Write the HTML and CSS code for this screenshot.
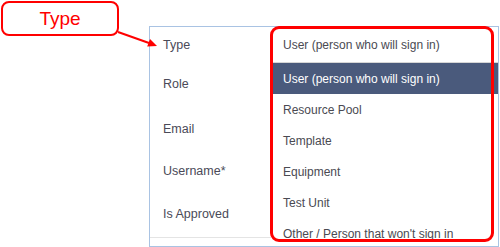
FILE: index.html
```html
<!DOCTYPE html>
<html lang="en">
<head>
  <meta charset="UTF-8" />
  <title>Type dropdown</title>
  <link rel="stylesheet" href="styles.css">
</head>
<body>
  <div class="page">
    <div class="panel">
      <ul class="labels">
        <li>Type</li>
        <li>Role</li>
        <li>Email</li>
        <li>Username*</li>
        <li>Is Approved</li>
      </ul>
      <div class="dropdown">
        <div class="dropdown-value">User (person who will sign in)</div>
        <ul class="dropdown-list">
          <li class="selected">User (person who will sign in)</li>
          <li>Resource Pool</li>
          <li>Template</li>
          <li>Equipment</li>
          <li>Test Unit</li>
          <li>Other / Person that won't sign in</li>
        </ul>
      </div>
    </div>

    <!-- annotation -->
    <div class="callout">Type</div>
    <div class="highlight-box"></div>
    <svg class="arrow" width="500" height="247" viewBox="0 0 500 247">
      <line x1="118" y1="32" x2="149" y2="43" stroke="#f00" stroke-width="2" />
      <polygon points="157,46 147.2,46.6 150,39.1" fill="#f00" />
    </svg>
  </div>
</body>
</html>
```

FILE: styles.css
```css
body {
  margin: 0;
  padding: 0;
  background: white;
  font-family: 'Liberation Sans', Arial, sans-serif;
}
.page {
  position: relative;
  width: 500px;
  height: 247px;
  overflow: hidden;
}
.panel {
  box-sizing: border-box;
  margin: 26px 0 0 149px;
  width: 350px;
  height: 221px;
  border: 1px solid #a9c3e3;
  display: grid;
  grid-template-columns: 121px 1fr;
  overflow: hidden;
}
.labels {
  list-style: none;
  margin: 0;
  padding: 0;
  display: grid;
  grid-template-rows: 36px 42px 47px 38px 47px;
  align-self: start;
  border-bottom: 1px solid #e4e4e4;
}
.labels li {
  display: flex;
  align-items: center;
  padding-left: 13px;
  font-size: 12.5px;
  color: #4a4a58;
}
.dropdown {
  font-size: 12px;
  color: #4a4a52;
}
.dropdown-value {
  height: 35px;
  display: flex;
  align-items: center;
  padding-left: 12px;
  border-bottom: 1px solid #d6d6d6;
}
.dropdown-list {
  list-style: none;
  margin: 0;
  padding: 0;
}
.dropdown-list li {
  height: 31px;
  display: flex;
  align-items: center;
  padding-left: 12px;
}
.dropdown-list li.selected {
  background: #4a5a7c;
  color: white;
}

.callout {
  position: absolute;
  left: 1px;
  top: 1px;
  box-sizing: border-box;
  width: 118px;
  height: 35px;
  border: 2px solid #f00;
  border-radius: 8px;
  background: white;
  color: #f00;
  font-size: 19px;
  display: flex;
  align-items: center;
  justify-content: center;
}
.highlight-box {
  position: absolute;
  left: 270px;
  top: 26px;
  box-sizing: border-box;
  width: 224px;
  height: 216px;
  border: 3px solid #f00;
  border-radius: 9px;
}
.arrow {
  position: absolute;
  left: 0;
  top: 0;
  pointer-events: none;
}
```
